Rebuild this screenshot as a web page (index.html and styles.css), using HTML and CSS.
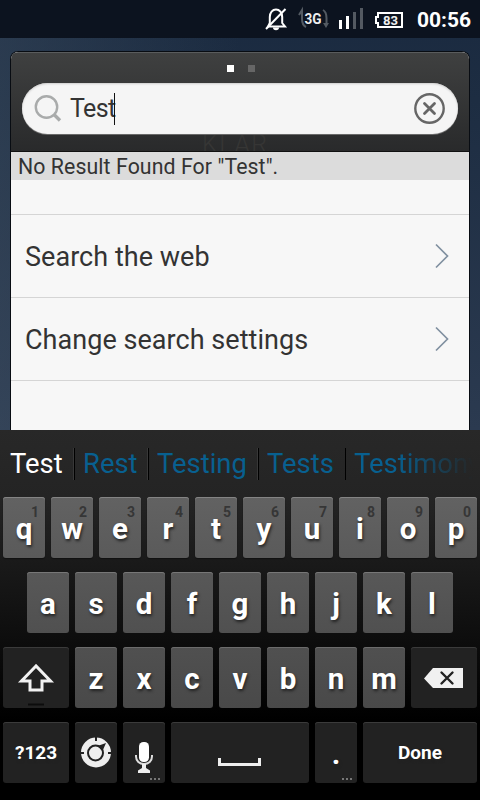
FILE: index.html
```html
<!DOCTYPE html>
<html lang="en">
<head>
<meta charset="utf-8">
<title>Search</title>
<link rel="stylesheet" href="styles.css">
</head>
<body>
<div class="screen">
  <header class="status">
    <svg class="status-icons" width="158" height="38" viewBox="0 0 158 38" fill="none">
      <g stroke="#fff" stroke-width="2">
        <path d="M9 26.500h17l-2.800-3.500v-6c0-4.500-2.700-7.500-6.200-7.500s-6.200 3-6.200 7.500v6z"/>
        <path d="M7 29L26.500 9"/>
      </g>
      <path d="M14 27.500h6a3 2.800 0 0 1-6 0z" fill="#fff"/>
      <path d="M47 27c-4-2-4-5-4-8v-7" stroke="#535a62" stroke-width="2"/>
      <path d="M40 15l3-5v7M64 10c3.500 2 3.500 5 3.500 8v6" stroke="#535a62" stroke-width="2"/>
      <path d="M64 23h6l-3 5z" fill="#535a62"/>
      <text class="tiny" x="45.500" y="24" font-size="14" textLength="17" lengthAdjust="spacingAndGlyphs">3G</text>
      <path fill="#fff" d="M80 20h3v9h-3zM87 16h3v13h-3z"/>
      <path fill="#535961" d="M94 12h3v17h-3zM101 8h3v21h-3z"/>
      <path d="M119 13h24v14h-24v-4h-2v-6h2z" stroke="#fff" stroke-width="2"/>
      <text class="tiny" x="124" y="24.500" font-size="12.500" textLength="15" lengthAdjust="spacingAndGlyphs">83</text>
    </svg>
    <span class="clock">00:56</span>
  </header>
  <main class="panel">
    <div class="head">
      <div class="dots"><i class="on"></i><i></i></div>
      <div class="field">
        <svg class="lens" width="28" height="28" viewBox="0 0 28 28" fill="none" stroke="#a9abab"><circle cx="12.500" cy="12" r="10.700" stroke-width="2.400"/><path d="M20 19.500l6 6" stroke-width="3.300"/></svg>
        <span class="query">Test</span><span class="caret"></span>
        <svg class="clear" width="32" height="32" viewBox="0 0 32 32" fill="none" stroke="#666"><circle cx="16.500" cy="15.500" r="14.200" stroke-width="2.400"/><path d="M11.500 10.500l10 10M21.500 10.500l-10 10" stroke-width="2.800" stroke-linecap="round"/></svg>
      </div>
      <span class="ghost">KLAR</span>
    </div>
    <div class="notice"><span>No Result Found For "Test".</span></div>
    <div class="spacer"></div>
    <div class="row"><span class="web">Search the web</span><svg width="14" height="26" viewBox="0 0 14 26" fill="none" stroke="#8090a0" stroke-width="1.700"><path d="M1 1.500L12.500 13 1 24.500"/></svg></div>
    <div class="row"><span class="settings">Change search settings</span><svg width="14" height="26" viewBox="0 0 14 26" fill="none" stroke="#8090a0" stroke-width="1.700"><path d="M1 1.500L12.500 13 1 24.500"/></svg></div>
  </main>
  <section class="keyboard">
    <div class="suggest"><span class="s1">Test</span><span class="s2">Rest</span><span class="s3">Testing</span><span class="s4">Tests</span><span class="s5">Testimony</span></div>
    <div class="keys k1">
      <b>q<small>1</small></b><b>w<small>2</small></b><b>e<small>3</small></b><b>r<small>4</small></b><b>t<small>5</small></b><b>y<small>6</small></b><b>u<small>7</small></b><b>i<small>8</small></b><b>o<small>9</small></b><b>p<small>0</small></b>
    </div>
    <div class="keys k2"><b>a</b><b>s</b><b>d</b><b>f</b><b>g</b><b>h</b><b>j</b><b>k</b><b>l</b></div>
    <div class="keys k3">
      <b class="fn wide"><svg width="66" height="61" viewBox="0 0 66 61"><path d="M33 19L18.500 34H27v9h12v-9h8.500z" fill="none" stroke="#f2f2f2" stroke-width="3"/><path d="M25 57.500h16" stroke="#0c0c0c" stroke-width="2"/></svg></b>
      <b>z</b><b>x</b><b>c</b><b>v</b><b>b</b><b>n</b><b>m</b>
      <b class="fn wide"><svg width="66" height="61" viewBox="0 0 66 61"><path d="M13 31.500L22 21h30v20H22z" fill="#f0f0f0"/><path d="M30.500 25.500l11 11M41.500 25.500l-11 11" stroke="#222" stroke-width="2.400" stroke-linecap="round"/></svg></b>
    </div>
    <div class="keys k4">
      <b class="fn wide label">?123</b>
      <b class="fn"><svg width="42" height="61" viewBox="0 0 42 61"><circle cx="21" cy="30.500" r="15" fill="#eee"/><path d="M21 15v4M6 31h3M33 31h3" stroke="#222" stroke-width="2"/><circle cx="20.500" cy="31" r="7.500" fill="#eee" stroke="#222" stroke-width="2"/><path d="M22.500 24L31 21l-3.500 8z" fill="#222"/></svg></b>
      <b class="fn"><svg width="42" height="61" viewBox="0 0 42 61"><rect x="16" y="20" width="10" height="20" rx="4.500" fill="#fff"/><path d="M13 33v1.500c0 4.500 3.500 7.500 8 7.500s8-3 8-7.500V33" fill="none" stroke="#ddd" stroke-width="2"/><path d="M19 42h4v4l4 2.500V51H15v-2.500l4-2.500z" fill="#eee"/><path d="M27 56h2v2h-2zm4 0h2v2h-2zm4 0h2v2h-2z" fill="#777"/></svg></b>
      <b class="fn space"><svg width="138" height="61" viewBox="0 0 138 61"><path d="M48.500 36v6.500h40V36" fill="none" stroke="#eee" stroke-width="3"/></svg></b>
      <b class="fn period"><span>.</span><svg width="42" height="61" viewBox="0 0 42 61"><path d="M27 56h2v2h-2zm4 0h2v2h-2zm4 0h2v2h-2z" fill="#777"/></svg></b>
      <b class="fn done label">Done</b>
    </div>
  </section>
</div>
</body>
</html>
```
FILE: styles.css
```css
* { box-sizing: border-box; }
body { margin: 0; font-family: Roboto, "Liberation Sans", sans-serif; }
.screen { width: 480px; height: 800px; overflow: hidden; display: flex; flex-direction: column; background: linear-gradient(90deg, rgba(65,82,101,.4), rgba(65,82,101,0) 50%), linear-gradient(#1a2a40, #1d2d42 100px, #2b3a50 430px); }
svg { display: block; flex: none; }
.status { height: 38px; flex: none; background: #0c131f; display: flex; padding-left: 259px; }
.tiny { fill: #eee; font-weight: 700; }
.clock { width: 60px; padding-top: 1px; color: #fff; font-weight: 700; font-size: 21px; line-height: 38px; white-space: nowrap; }
.panel { height: 379px; flex: none; margin: 13px 10px 0; border: 1px solid #080c12; border-bottom: 0; border-radius: 8px 8px 0 0; background: #f7f7f7; overflow: hidden; }
.head { height: 100px; background: linear-gradient(#3f4040, #292a2b); border-top: 1px solid #5a5c5d; border-bottom: 1px solid #111; padding: 12px 11px 0; position: relative; overflow: hidden; }
.dots { display: flex; gap: 14px; padding-left: 205px; height: 18px; }
.dots i { width: 7px; height: 7px; background: #666; }
.dots .on { background: #fff; }
.field { height: 51px; border-radius: 26px; background: #f5f5f5; box-shadow: 0 1px 0 #696969, inset 0 1px 2px #ccc; display: flex; align-items: center; padding: 0 13px 0 12px; position: relative; z-index: 1; }
.query { margin-left: 8px; font-size: 25px; letter-spacing: -.6px; color: #333; line-height: 51px; width: 44px; white-space: nowrap; }
.caret { width: 1px; height: 32px; background: #111; }
.clear { margin-left: auto; }
.ghost { position: absolute; left: 191px; top: 79px; font-size: 25px; line-height: 25px; letter-spacing: 1.5px; color: #363635; font-weight: 300; }
.notice { height: 28px; background: #dcdcdc; padding-left: 7px; font-size: 21.3px; letter-spacing: .08px; line-height: 30px; color: #333; white-space: nowrap; }
.spacer { height: 35px; border-bottom: 1px solid #d5d5d5; }
.row { height: 83px; border-bottom: 1px solid #d5d5d5; display: flex; align-items: center; justify-content: space-between; padding: 0 20px 0 14px; font-size: 27px; letter-spacing: .04px; color: #333; white-space: nowrap; }
.row span { padding-top: 2px; }
.keyboard { flex: 1; background: linear-gradient(#282828, #242424 67px, #0c0c0c 217px, #000 290px); }
.suggest { height: 67px; display: flex; align-items: center; font-size: 27.4px; color: #086090; white-space: nowrap; overflow: hidden; }
.suggest span { height: 32px; line-height: 32px; border-left: 1px solid #000; box-shadow: -1px 0 0 #383838; flex: none; }
.suggest .s1 { width: 74px; padding-left: 10px; color: #fff; border: 0; box-shadow: none; }
.s2 { width: 74px; padding-left: 8px; }
.s3 { width: 110px; padding-left: 8px; }
.s4 { width: 87px; padding-left: 8px; }
.s5 { width: 135px; padding-left: 8px; -webkit-mask-image: linear-gradient(90deg, #000 50px, transparent 128px); mask-image: linear-gradient(90deg, #000 50px, transparent 128px); }
.keys { display: flex; gap: 6px; height: 61px; margin-bottom: 14px; padding: 0 3px; }
.keys b { width: 42px; height: 61px; flex: none; border-radius: 3px; background: linear-gradient(#626262, #5a5a5a); box-shadow: inset 0 1px 0 #848484, 0 1px 1px #111; color: #fff; text-shadow: 1px 2px 3px #222; text-align: center; font-size: 29.5px; line-height: 64px; position: relative; }
.keys small { position: absolute; right: 6px; top: 7px; font-size: 14px; line-height: 17px; color: #363636; text-shadow: none; }
.k2 { padding-left: 27px; }
.k2 b { background: linear-gradient(#585858, #505050); box-shadow: inset 0 1px 0 #777; }
.k3 b { background: linear-gradient(#505050, #494949); box-shadow: inset 0 1px 0 #6c6c6c; }
.keys .fn { background: #222; box-shadow: inset 0 1px 0 #3b3b3b; }
.keys .wide { width: 66px; }
.keys .space { width: 138px; }
.keys .done { width: 114px; }
.keys .label { font-size: 19px; line-height: 61px; }
.period span { display: block; height: 61px; }
.period svg { margin-top: -61px; }
```
